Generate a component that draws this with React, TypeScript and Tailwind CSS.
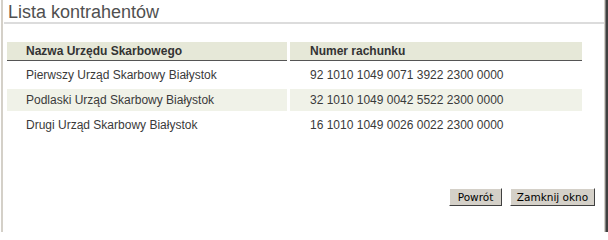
export default function App() {
  const rows = [
    { name: "Pierwszy Urząd Skarbowy Białystok", account: "92 1010 1049 0071 3922 2300 0000" },
    { name: "Podlaski Urząd Skarbowy Białystok", account: "32 1010 1049 0042 5522 2300 0000" },
    { name: "Drugi Urząd Skarbowy Białystok", account: "16 1010 1049 0026 0022 2300 0000" },
  ];

  return (
    <div className="w-[608px] h-[232px] bg-white border-l border-white font-['Liberation_Sans',Arial,sans-serif]">
      <div className="h-full border-l-2 border-[#d4d0c8]">
        <div className="h-full border-r-2 border-[#404040]">
          <div className="h-full border-r border-[#808080]">
            <div className="h-full border-r border-[#d4d0c8] pl-px flex flex-col">
              {/* Title */}
              <div className="h-[24px] border-b-2 border-[#dcdcdc] pl-[4px] pt-[1px] text-[18px] leading-[22px] text-[#505050]">
                Lista kontrahentów
              </div>

              {/* Table */}
              <div className="mt-[18px] ml-[3px] w-[575px] text-[12px] text-[#3a3a3a]">
                <div className="flex gap-[3px] font-bold text-[#333]">
                  <div className="w-[280px] h-[19px] bg-[#e6e8d8] border-b border-[#555] pl-[19px] leading-[18px]">
                    Nazwa Urzędu Skarbowego
                  </div>
                  <div className="flex-1 h-[19px] bg-[#e6e8d8] border-b border-[#555] pl-[20px] leading-[18px]">
                    Numer rachunku
                  </div>
                </div>
                {rows.map((r, i) => (
                  <div key={r.account} className="flex gap-[3px] mt-[3px]">
                    <div className={`w-[280px] h-[22px] pl-[19px] leading-[22px] ${i % 2 === 1 ? "bg-[#f0f2e8]" : ""}`}>
                      {r.name}
                    </div>
                    <div className={`flex-1 h-[22px] pl-[20px] leading-[22px] ${i % 2 === 1 ? "bg-[#f0f2e8]" : ""}`}>
                      {r.account}
                    </div>
                  </div>
                ))}
              </div>

              {/* Buttons */}
              <div className="mt-auto mb-[26px] flex justify-end gap-[8px] pr-[9px]">
                <button className="h-[18px] w-[53px] bg-[#d4d0c8] border border-t-white border-l-white border-r-[#404040] border-b-[#404040] leading-[15px] text-black font-['DejaVu_Sans',sans-serif] text-[10.5px]">
                  Powrót
                </button>
                <button className="h-[18px] w-[85px] bg-[#d4d0c8] border border-t-white border-l-white border-r-[#404040] border-b-[#404040] leading-[15px] text-black font-['DejaVu_Sans',sans-serif] text-[10.5px]">
                  Zamknij okno
                </button>
              </div>
            </div>
          </div>
        </div>
      </div>
    </div>
  );
}
